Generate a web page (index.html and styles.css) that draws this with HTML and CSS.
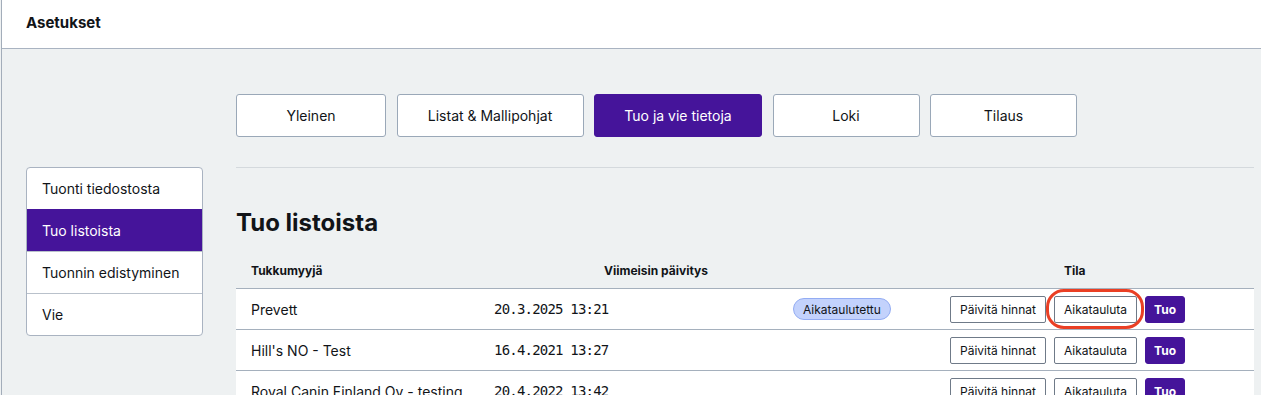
FILE: index.html
```html
<!DOCTYPE html>
<html lang="fi">
<head>
    <meta charset="UTF-8">
    <meta name="viewport" content="width=device-width, initial-scale=1.0">
    <title>Asetukset</title>
    <link rel="stylesheet" href="styles.css">
</head>
<body>
    <div class="page">
        <header class="topbar">
            <h1>Asetukset</h1>
        </header>

        <main class="layout">
            <aside class="side-menu">
                <a href="#" class="side-item">Tuonti tiedostosta</a>
                <a href="#" class="side-item active">Tuo listoista</a>
                <a href="#" class="side-item">Tuonnin edistyminen</a>
                <a href="#" class="side-item">Vie</a>
            </aside>

            <section class="content">
                <nav class="tabs">
                    <a href="#" class="tab">Yleinen</a>
                    <a href="#" class="tab">Listat &amp; Mallipohjat</a>
                    <a href="#" class="tab active">Tuo ja vie tietoja</a>
                    <a href="#" class="tab">Loki</a>
                    <a href="#" class="tab">Tilaus</a>
                </nav>

                <hr class="divider">

                <h2 class="page-title">Tuo listoista</h2>

                <div class="table">
                    <div class="table-head">
                        <div class="th th-name">Tukkumyyjä</div>
                        <div class="th th-date">Viimeisin päivitys</div>
                        <div class="th th-state">Tila</div>
                    </div>

                    <!-- Rows -->
                    <div class="row">
                        <div class="cell name">Prevett</div>
                        <div class="cell date">20.3.2025 13:21</div>
                        <div class="cell state"><span class="pill">Aikataulutettu</span></div>
                        <div class="cell actions">
                            <button class="btn">Päivitä hinnat</button>
                            <button class="btn highlighted">Aikatauluta</button>
                            <button class="btn primary">Tuo</button>
                        </div>
                    </div>
                    <div class="row">
                        <div class="cell name">Hill's NO - Test</div>
                        <div class="cell date">16.4.2021 13:27</div>
                        <div class="cell state"></div>
                        <div class="cell actions">
                            <button class="btn">Päivitä hinnat</button>
                            <button class="btn">Aikatauluta</button>
                            <button class="btn primary">Tuo</button>
                        </div>
                    </div>
                    <div class="row">
                        <div class="cell name">Royal Canin Finland Oy - testing</div>
                        <div class="cell date">20.4.2022 13:42</div>
                        <div class="cell state"></div>
                        <div class="cell actions">
                            <button class="btn">Päivitä hinnat</button>
                            <button class="btn">Aikatauluta</button>
                            <button class="btn primary">Tuo</button>
                        </div>
                    </div>
                </div>
            </section>
        </main>
    </div>
</body>
</html>
```

FILE: styles.css
```css
body {
    margin: 0;
    padding: 0;
    font-family: "Inter", "Noto Sans", sans-serif;
    color: #111418;
    background: #eef1f2;
}

.page {
    margin-left: 1px;
    border-left: 1px solid #a3adba;
    min-height: 395px;
}

/* Top bar */
.topbar {
    background: #fff;
    height: 48px;
    border-bottom: 1px solid #a9b3c1;
    display: flex;
    align-items: center;
    padding-left: 24px;
}

.topbar h1 {
    margin: 0;
    font-size: 15px;
    font-weight: 700;
    padding-bottom: 4px;
}

.layout {
    display: flex;
    gap: 33px;
    padding-left: 24px;
    padding-right: 7px;
}

/* Side menu */
.side-menu {
    width: 175px;
    flex-shrink: 0;
    margin-top: 118px;
    align-self: flex-start;
    background: #fff;
    border: 1px solid #a9b3c1;
    border-radius: 4px;
    overflow: hidden;
}

.side-item {
    display: flex;
    align-items: center;
    height: 41px;
    padding-left: 15px;
    font-size: 14px;
    color: #111418;
    text-decoration: none;
    border-top: 1px solid #b9c1cb;
}

.side-item:first-child {
    border-top: none;
}

.side-item.active {
    background: #45149a;
    color: #fff;
    border-top-color: #45149a;
}

/* Content */
.content {
    flex: 1;
    padding-top: 45px;
}

.tabs {
    display: grid;
    grid-template-columns: 150px 187px 168px 147px 147px;
    column-gap: 10.5px;
}

.tab {
    display: flex;
    align-items: center;
    justify-content: center;
    height: 43px;
    box-sizing: border-box;
    background: #fff;
    border: 1px solid #9aa8b8;
    border-radius: 3px;
    font-size: 14px;
    color: #111418;
    text-decoration: none;
}

.tab.active {
    background: #45149a;
    border-color: #45149a;
    color: #fff;
}

.divider {
    border: none;
    border-top: 1px solid #d4d9dd;
    margin: 30px 0 0;
}

.page-title {
    margin: 40px 0 16px;
    font-size: 24px;
    font-weight: 700;
    line-height: 29px;
}

/* Table */
.table-head {
    display: flex;
    height: 35px;
    align-items: center;
    padding-left: 15px;
    border-bottom: 1px solid #a5b0bd;
    font-size: 12px;
    font-weight: 700;
}

.th-name {
    width: 353px;
}

.th-date {
    width: 460px;
}

.row {
    display: flex;
    align-items: center;
    height: 40px;
    padding-left: 15px;
    background: #fff;
    border-bottom: 1px solid #a5b0bd;
}

.cell {
    font-size: 14px;
}

.name {
    width: 243px;
}

.date {
    width: 299px;
    font-family: "DejaVu Sans Mono", "Liberation Mono", monospace;
    font-size: 14px;
    letter-spacing: -0.8px;
}

.state {
    width: 157px;
}

.pill {
    display: inline-flex;
    align-items: center;
    height: 20px;
    padding: 0 9px;
    font-size: 12px;
    background: #c3d2fc;
    border: 1px solid #93acf3;
    border-radius: 11px;
}

.actions {
    display: flex;
    gap: 8px;
}

.btn {
    position: relative;
    height: 27px;
    padding: 0 9px;
    font-family: "Inter", "Noto Sans", sans-serif;
    font-size: 12px;
    color: #111418;
    background: #fff;
    border: 1px solid #6f7a88;
    border-radius: 2px;
    cursor: pointer;
}

.btn.primary {
    background: #45149a;
    border-color: #45149a;
    color: #fff;
    font-weight: 700;
    width: 40px;
    padding: 0;
    border-radius: 3px;
}

/* annotation ring around the highlighted button */
.btn.highlighted::after {
    content: "";
    position: absolute;
    left: -9px;
    right: -8px;
    top: -8px;
    bottom: -7px;
    border: 3px solid #ea3f24;
    border-radius: 18px;
}
```
